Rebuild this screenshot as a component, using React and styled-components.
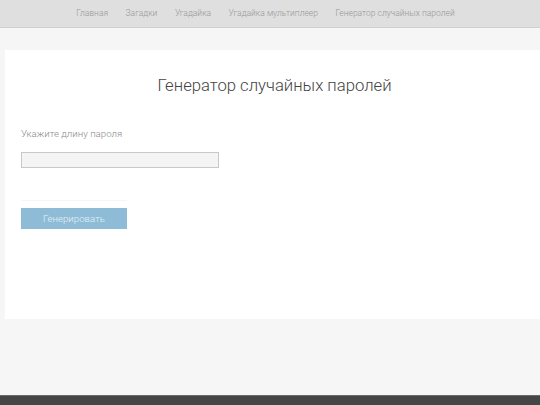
import React from "react";
import styled, { createGlobalStyle } from "styled-components";

const Global = createGlobalStyle`
  html, body { margin: 0; padding: 0; overflow: hidden; }
  body {
    background: #f6f6f6;
    font-family: "Roboto Light", Roboto, "Noto Sans", sans-serif;
    font-weight: 300;
  }
`;

const Page = styled.div`
  display: flex;
  flex-direction: column;
  min-height: 405px;
`;

const Nav = styled.nav`
  height: 28px;
  background: #dfdfdf;
  border-bottom: 1px solid #d0d0d0;
  box-sizing: border-box;
  display: flex;
  align-items: center;
  justify-content: center;
  padding-right: 9px;
  gap: 17.5px;
`;

const NavLink = styled.a`
  font-size: 8.5px;
  color: #979797;
  text-decoration: none;
  line-height: 1;
`;

const Main = styled.main`
  flex: 1;
  padding: 22px 0 0 5px;
`;

const Card = styled.section`
  background: #fff;
  height: 269px;
  box-sizing: border-box;
  padding: 0 16px;
  display: flex;
  flex-direction: column;
`;

const Title = styled.h1`
  margin: 26px 0 0;
  padding-left: 4px;
  text-align: center;
  font-size: 16.7px;
  font-weight: 300;
  color: #444;
  line-height: 20px;
`;

const Label = styled.label`
  margin-top: 32px;
  font-size: 9.7px;
  color: #8a8a8a;
  line-height: 12px;
`;

const Input = styled.input`
  margin-top: 12px;
  width: 198px;
  height: 16px;
  box-sizing: border-box;
  background: #f4f4f4;
  border: 1px solid #c9c9c9;
  padding: 0 4px;
  outline: none;
`;

const Divider = styled.div`
  margin-top: 32px;
  width: 106px;
  height: 1px;
  background: #f6f6f6;
`;

const Button = styled.button`
  margin-top: 7px;
  width: 106px;
  height: 21px;
  border: none;
  background: #8ebcd6;
  color: #e6f1f7;
  font-family: "Roboto Light", Roboto, "Noto Sans", sans-serif;
  font-weight: 300;
  font-size: 9.7px;
  padding: 0;
  cursor: pointer;
`;

const Footer = styled.footer`
  height: 9px;
  background: #444547;
  border-top: 1px solid #6a6a6a;
`;

const links = [
  "Главная",
  "Загадки",
  "Угадайка",
  "Угадайка мультиплеер",
  "Генератор случайных паролей",
];

export default function App() {
  return (
    <Page>
      <Global />
      <Nav>
        {links.map((l) => (
          <NavLink key={l} href="#">
            {l}
          </NavLink>
        ))}
      </Nav>
      <Main>
        <Card>
          <Title>Генератор случайных паролей</Title>
          <Label>Укажите длину пароля</Label>
          <Input type="text" />
          <Divider />
          <Button>Генерировать</Button>
        </Card>
      </Main>
      <Footer />
    </Page>
  );
}
